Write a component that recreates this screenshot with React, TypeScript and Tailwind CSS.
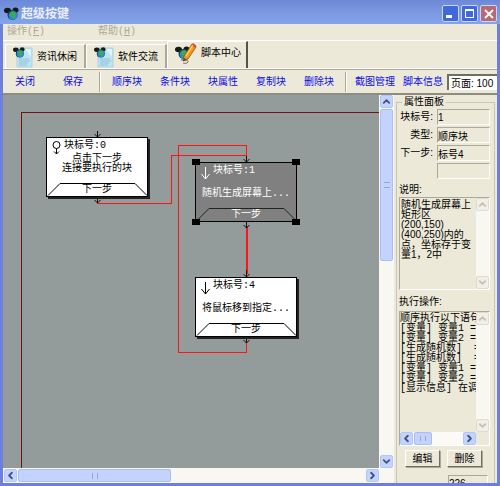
import { useState } from 'react';
import type { ReactNode } from 'react';
import { ChevronDown, ChevronLeft, ChevronRight, ChevronUp } from 'lucide-react';
import clsx from 'clsx';

const scrollIcons = {
  up: ChevronUp,
  down: ChevronDown,
  left: ChevronLeft,
  right: ChevronRight,
};

interface ScrollButtonProps {
  dir: keyof typeof scrollIcons;
  disabled?: boolean;
}

function ScrollButton({ dir, disabled }: ScrollButtonProps) {
  const Icon = scrollIcons[dir];
  return (
    <button
      type="button"
      aria-label={`Scroll ${dir}`}
      disabled={disabled}
      className={clsx(
        'flex size-[13px] shrink-0 items-center justify-center rounded-xs border',
        disabled
          ? 'border-[#dedcd0] bg-[#f1efe6] text-[#c3c1b4]'
          : 'border-[#b3c7f7] bg-[#c3d3fd] text-[#41557e]'
      )}
    >
      <Icon className="size-[11px] shrink-0" strokeWidth={4} />
    </button>
  );
}

function Mouse() {
  return (
    <>
      <ellipse cx="3.500" cy="3.500" rx="3.500" ry="2.800" fill="#151a18" />
      <ellipse cx="11.500" cy="3" rx="3" ry="2.600" fill="#151a18" />
      <circle cx="8.500" cy="8" r="5" fill="#1d3f53" />
      <circle cx="9" cy="8.500" r="4.300" fill="#2a8bd8" />
      <path d="M6 6l3-2 3 2-1 2 1 2-3 2-1-3-2-1z" fill="#35b04a" />
    </>
  );
}

function MouseIcon() {
  return (
    <svg viewBox="0 0 16 14" className="h-[14px] w-4">
      <Mouse />
    </svg>
  );
}

function PaperIcon() {
  return (
    <svg viewBox="0 0 20 22" className="h-[22px] w-5 shrink-0">
      <path d="M4 2h15v19H4z" fill="#bfe3f0" stroke="#a9d3e2" />
      <path d="M12 3h6v8z" fill="#e3f4f9" />
      <path d="M6 13h10M6 15h11M6 17h9M6 19h8" stroke="#8cc3da" />
      <g transform="translate(0 1) scale(.8)">
        <Mouse />
      </g>
    </svg>
  );
}

function PencilIcon() {
  return (
    <svg viewBox="0 0 22 22" className="size-[22px] shrink-0">
      <g transform="translate(0 4)">
        <Mouse />
      </g>
      <path d="M9 14L17 2l4 3-8 12-5 2z" fill="#f39a1c" stroke="#9a4d0b" strokeWidth=".8" />
      <path d="M16.500 3l4 3 1-2-3.500-3z" fill="#d8402a" />
      <path d="M11 14l7-11" stroke="#ffd65c" strokeWidth="1.200" />
      <path d="M8 19l1.500-3 2.500 2z" fill="#3b2a1b" />
      <path d="M6 18c3-1 8 0 7 2s-5 1-5 1" fill="none" stroke="#6c6c66" />
    </svg>
  );
}

const tabs = [
  { id: 'news', label: '资讯休闲', icon: PaperIcon },
  { id: 'talk', label: '软件交流', icon: PaperIcon },
  { id: 'script', label: '脚本中心', icon: PencilIcon },
];

const mono = "font-['Liberation_Mono','Noto_Sans_CJK_SC',monospace]";

function Separator() {
  return <span className="h-5 w-[2px] shrink-0 border-l border-[#aca899] bg-white" />;
}

function ToolButton({ children, wide }: { children: ReactNode; wide?: boolean }) {
  return (
    <button
      type="button"
      className={clsx('h-5 shrink-0 whitespace-nowrap text-center text-[#0a0aee]', wide ? 'w-12' : 'w-11')}
    >
      {children}
    </button>
  );
}

interface BlockProps {
  id: number;
  lines: string[];
  place: string;
  start?: boolean;
  selected?: boolean;
}

function Block({ id, lines, place, start, selected }: BlockProps) {
  return (
    <div
      className={clsx(
        'absolute flex h-[60px] w-[102px] flex-col border border-black',
        mono,
        place,
        selected ? 'bg-[#808080] text-white' : 'bg-white text-black shadow-[2px_2px_0_#222]'
      )}
    >
      <div className="flex h-4 items-center gap-[2px] pl-1">
        <svg viewBox="0 0 11 14" className="mt-1 h-[14px] w-[11px]" fill="none" stroke="currentColor">
          {start ? (
            <>
              <circle cx="5.500" cy="4" r="3.500" />
              <path d="M5.500 7.500V13M3 10.500l2.500 2.500L8 10.500" />
            </>
          ) : (
            <path d="M5.500 1v12M1.500 8l4 5 4-5" />
          )}
        </svg>
        <span>块标号:{id}</span>
      </div>
      <div
        className={clsx(
          'flex flex-1 flex-col items-center whitespace-nowrap text-center leading-[10px]',
          start ? 'justify-start' : 'justify-center'
        )}
      >
        {lines.map((line) => (
          <p key={line}>{line}</p>
        ))}
      </div>
      <button type="button" className="relative h-[13px] w-full shrink-0 leading-[13px]">
        <svg
          viewBox="0 0 100 13"
          className="absolute inset-0 h-[13px] w-[100px]"
          fill="none"
          stroke={selected ? '#222' : '#000'}
        >
          <path d="M1 12.500L13 .5h75l12 12" />
        </svg>
        下一步
      </button>
      {selected && (
        <>
          <i className="absolute -left-1 -top-1 h-[6px] w-2 bg-black" />
          <i className="absolute -right-1 -top-1 h-[6px] w-2 bg-black" />
          <i className="absolute -bottom-1 -left-1 h-[6px] w-2 bg-black" />
          <i className="absolute -bottom-1 -right-1 h-[6px] w-2 bg-black" />
        </>
      )}
    </div>
  );
}

function Wires() {
  return (
    <svg viewBox="0 0 375 373" className="absolute left-0 top-0 h-[373px] w-[375px]" fill="none">
      <g fill="#ff1414" shapeRendering="crispEdges">
        {/* block 0 to block 1 */}
        <path d="M94 108h75v1H94zM168 60h1v49h-1zM168 60h76v1h-76z" />
        {/* block 4 back to block 1 */}
        <path d="M175 50h69v1h-69zM243 50h1v13h-1zM175 50h1v208h-1zM175 257h69v1h-69zM243 248h1v10h-1z" />
        {/* block 1 to block 4 */}
        <path d="M243 131h2v48h-2z" />
      </g>
      <g stroke="#111">
        <path d="M94.500 36v6M91.500 39l3 3 3-3" />
        <path d="M94.500 102v6M91.500 105l3 3 3-3" />
        <path d="M243.500 61v6M240.500 64l3 3 3-3" />
        <path d="M243.500 126v7M240.500 130l3 3 3-3" />
        <path d="M243.500 175v7M240.500 179l3 3 3-3" />
        <path d="M243.500 241v7M240.500 245l3 3 3-3" />
      </g>
    </svg>
  );
}

const fields = [
  { id: 'no', label: '块标号:', value: '1' },
  { id: 'kind', label: '类型:', value: '顺序块' },
  { id: 'next', label: '下一步:', value: '标号4' },
  { id: 'other', label: '', value: '' },
];

const description = '随机生成屏幕上矩形区\n(200,150)\n(400,250)内的点，坐标存于变量1，2中';

const actions = [
  '顺序执行以下语句',
  '[变量] 变量1 =',
  '[变量] 变量2 =',
  '[生成随机数]  =',
  '[生成随机数]  =',
  '[变量] 变量1 =',
  '[变量] 变量2 =',
  '[显示信息] 在调',
].join('\n');

const sunken = 'border border-b-white border-l-[#aca899] border-r-white border-t-[#aca899]';

function PushButton({ children }: { children: ReactNode }) {
  return (
    <button
      type="button"
      className="h-[17px] w-[35px] border border-b-[#716f64] border-l-white border-r-[#716f64] border-t-white bg-[#ece9d8] leading-[14px] shadow-[1px_1px_0_#aca899]"
    >
      {children}
    </button>
  );
}

function PropertyPanel() {
  return (
    <aside className="flex w-[103px] shrink-0 flex-col overflow-hidden px-[2px]">
      <fieldset className="min-h-0 min-w-0 flex-1 border border-b-0 border-[#c9c6b6] px-[2px]">
        <legend className="ml-[3px] px-[2px] leading-[14px]">属性面板</legend>
        <div className="flex flex-col gap-[2px]">
          {fields.map((f) => (
            <div key={f.id} className="flex h-4 items-center gap-1">
              <label htmlFor={f.id} className="w-[34px] shrink-0 whitespace-nowrap text-right">
                {f.label}
              </label>
              <input
                id={f.id}
                aria-label={f.label || '下一步二'}
                readOnly
                defaultValue={f.value}
                className={clsx('h-4 w-[53px] bg-transparent leading-[14px]', sunken)}
              />
            </div>
          ))}
        </div>

        <label htmlFor="desc" className="mt-1 block h-[14px] leading-[14px]">
          说明:
        </label>
        <div className={clsx('flex h-[93px] w-[91px]', sunken)}>
          <textarea
            id="desc"
            readOnly
            defaultValue={description}
            className="min-w-0 flex-1 resize-none overflow-hidden pl-px pt-[2px] leading-[10px]"
          />
          <div className="flex flex-col justify-between bg-[#f8f7f2]">
            <ScrollButton dir="up" disabled />
            <ScrollButton dir="down" disabled />
          </div>
        </div>

        <label htmlFor="actions" className="mt-[5px] block h-4 leading-[14px]">
          执行操作:
        </label>
        <div className={clsx('flex h-[135px] w-[91px]', sunken)}>
          <div className="flex min-w-0 flex-1 flex-col">
            <textarea
              id="actions"
              readOnly
              wrap="off"
              defaultValue={actions}
              className={clsx('min-h-0 w-full flex-1 resize-none overflow-hidden pt-[2px] leading-[10px]', mono)}
            />
            <div className="flex bg-[#fbfaf6]">
              <ScrollButton dir="left" />
              <div className="mx-px flex w-[18px] items-center justify-center rounded-xs border border-[#a9bff3] bg-[#c3d3fd] text-[#8fa8e4]">
                <span className="h-[5px] w-[6px] border-x border-current" />
              </div>
              <div className="ml-auto">
                <ScrollButton dir="right" />
              </div>
            </div>
          </div>
          <div className="mb-[13px] flex flex-col justify-between bg-[#f8f7f2]">
            <ScrollButton dir="up" disabled />
            <ScrollButton dir="down" disabled />
          </div>
        </div>

        <div className="mt-1 flex gap-[7px] pl-[6px]">
          <PushButton>编辑</PushButton>
          <PushButton>删除</PushButton>
        </div>
        <div className="mt-2 flex items-start pl-[49px]">
          <input
            aria-label="坐标"
            readOnly
            defaultValue="226"
            className={clsx('h-4 w-10 bg-transparent leading-[14px]', sunken)}
          />
        </div>
      </fieldset>
    </aside>
  );
}

const captionButton = 'flex size-[17px] items-center justify-center rounded-xs border border-[#c9d6f5] text-white';

export default function App() {
  const [active, setActive] = useState('script');

  return (
    <div className="flex h-screen flex-col overflow-hidden bg-[#6d7fdc] font-['Liberation_Sans','Noto_Sans_CJK_SC',sans-serif] text-[10px] leading-[14px] text-black">
      {/* Title bar */}
      <header className="flex h-6 shrink-0 items-center bg-linear-to-b from-[#6c88d8] via-[#7c98e0] to-[#83a4ea] pl-1 pr-[3px] pt-[3px]">
        <MouseIcon />
        <h1 className="ml-px text-xs font-bold text-[#e9effc]">超级按键</h1>
        <div className="ml-auto flex gap-[2px]">
          <button type="button" aria-label="Minimize" className={clsx(captionButton, 'bg-[#4169dc]')}>
            <span className="mr-1 mt-[6px] h-[3px] w-[6px] bg-current" />
          </button>
          <button type="button" aria-label="Maximize" className={clsx(captionButton, 'bg-[#4169dc]')}>
            <span className="h-[9px] w-[9px] border border-t-2 border-current" />
          </button>
          <button type="button" aria-label="Close" className={clsx(captionButton, 'bg-[#b86a74]')}>
            <svg viewBox="0 0 10 10" className="size-[10px]" stroke="currentColor" strokeWidth="1.800">
              <path d="M1 1l8 8M9 1L1 9" />
            </svg>
          </button>
        </div>
      </header>

      <div className="mx-[3px] mb-[3px] flex min-h-0 flex-1 flex-col bg-[#ece9d8]">
        {/* Menu */}
        <nav className={clsx('flex h-[17px] shrink-0 items-center border-b border-white pl-1 text-[#aca899]', mono)}>
          <button type="button" className="w-[91px] text-left">
            操作(<u>F</u>)
          </button>
          <button type="button">
            帮助(<u>H</u>)
          </button>
        </nav>

        {/* Tabs */}
        <div className="flex h-7 shrink-0 items-end border-b border-white pl-[2px]">
          {tabs.map(({ id, label, icon: Icon }) => (
            <button
              key={id}
              type="button"
              onClick={() => setActive(id)}
              className={clsx(
                'flex w-[81px] items-center gap-1 whitespace-nowrap border-l border-t border-white pl-[7px]',
                active === id ? 'h-[27px] border-r-2 border-r-[#55534b] pb-1' : 'h-6 border-r-2 border-r-[#aca899]'
              )}
            >
              <Icon />
              {label}
            </button>
          ))}
        </div>

        {/* Toolbar */}
        <div className="flex h-[26px] shrink-0 items-center gap-1 overflow-hidden border-b-2 border-t border-b-[#8e8c80] border-t-[#aca899]">
          <ToolButton>关闭</ToolButton>
          <ToolButton>保存</ToolButton>
          <Separator />
          <ToolButton>顺序块</ToolButton>
          <ToolButton>条件块</ToolButton>
          <ToolButton>块属性</ToolButton>
          <ToolButton>复制块</ToolButton>
          <ToolButton>删除块</ToolButton>
          <Separator />
          <div className="flex min-w-0 flex-1 items-center">
            <ToolButton wide>截图管理</ToolButton>
            <ToolButton wide>脚本信息</ToolButton>
            <input
              aria-label="页面"
              defaultValue="页面: 100"
              className="h-4 min-w-0 flex-1 border-l-2 border-t-2 border-[#716f64] bg-white pl-[2px]"
            />
          </div>
        </div>

        <div className="flex min-h-0 flex-1">
          <main className="flex min-w-0 flex-1 flex-col">
            <div className="flex min-h-0 flex-1">
              {/* Flow canvas */}
              <div className="relative min-w-0 flex-1 overflow-hidden bg-[#949c9b]">
                <div className="absolute -bottom-1 -right-1 left-[18px] top-[17px] border border-[#6e1414]" />
                <Wires />
                <Block id={0} start lines={['点击下一步', '连接要执行的块']} place="left-[43px] top-[42px]" />
                <Block id={1} selected lines={['随机生成屏幕上...']} place="left-[192px] top-[67px]" />
                <Block id={4} lines={['将鼠标移到指定...']} place="left-[192px] top-[182px]" />
              </div>
              <div className="flex w-[15px] shrink-0 flex-col items-center bg-[#f8f7f2]">
                <ScrollButton dir="up" />
                <div className="my-px flex h-[152px] w-[13px] flex-col items-center justify-center rounded-xs border border-[#a9bff3] bg-[#c3d3fd]">
                  <span className="h-[6px] w-[6px] border-y border-[#8fa8e4]" />
                </div>
                <div className="mt-auto">
                  <ScrollButton dir="down" />
                </div>
              </div>
            </div>
            <div className="flex h-[15px] shrink-0 items-center bg-[#f8f7f2] pl-px pr-[15px]">
              <ScrollButton dir="left" />
              <div className="mx-px flex h-[13px] w-[153px] items-center justify-center rounded-xs border border-[#a9bff3] bg-[#c3d3fd]">
                <span className="h-[6px] w-[6px] border-x border-[#8fa8e4]" />
              </div>
              <div className="ml-auto">
                <ScrollButton dir="right" />
              </div>
            </div>
          </main>
          <PropertyPanel />
        </div>
      </div>
    </div>
  );
}
